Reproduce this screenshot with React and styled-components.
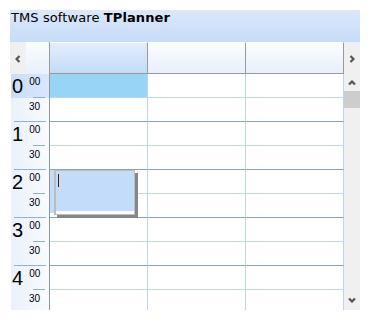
import React from "react";
import styled, { createGlobalStyle } from "styled-components";

const Global = createGlobalStyle`
  html, body { margin: 0; padding: 0; background: #fff; }
  body { font-family: "DejaVu Sans", Verdana, sans-serif; }
`;

const Page = styled.div`
  padding: 10px;
`;

const Planner = styled.div`
  width: 350px;
  height: 300px;
  display: flex;
  flex-direction: column;
  overflow: hidden;
  background: #fff;
`;

const Caption = styled.div`
  height: 32px;
  box-sizing: border-box;
  padding: 0 0 0 1px;
  font-family: "DejaVu Sans", Verdana, sans-serif;
  font-size: 13px;
  line-height: 16px;
  letter-spacing: 0.1px;
  color: #000;
  background: linear-gradient(to bottom, #dbe8fb, #c6dcf8);
  b { font-weight: bold; }
`;

const HeaderRow = styled.div`
  display: flex;
  height: 32px;
`;

const NavArrow = styled.div`
  width: 16px;
  flex: none;
  background: #f0f0f0;
  display: flex;
  align-items: center;
  justify-content: center;
  padding-top: 1px;
  box-sizing: border-box;
`;

const TimeHead = styled.div`
  width: 24px;
  flex: none;
  box-sizing: border-box;
  border-right: 1px solid #9a9a9a;
  background: linear-gradient(to bottom, #fbfdff, #e8f0fc);
`;

const ColHead = styled.div`
  width: 98px;
  flex: none;
  box-sizing: border-box;
  border-right: 1px solid #9a9a9a;
  border-bottom: 1px solid #9a9a9a;
  border-top: 1px solid #fff;
  background: ${(p) =>
    p.$active
      ? "linear-gradient(to bottom, #e2edfc, #c3dbf8)"
      : "linear-gradient(to bottom, #fbfdff, #e8f0fc)"};
`;

const Body = styled.div`
  flex: 1;
  display: flex;
  min-height: 0;
  overflow: hidden;
`;

const TimeColumn = styled.div`
  width: 40px;
  flex: none;
  box-sizing: border-box;
  border-right: 1px solid #8c96a4;
  background: linear-gradient(to right, #fff 0px, #fff 1px, #eaf1fc 1px, #f8fbff);
  display: flex;
  flex-direction: column;
`;

const Slot = styled.div`
  height: 24px;
  flex: none;
  display: flex;
  flex-direction: column;
  background: ${(p) =>
    p.$active ? "linear-gradient(to right, #fff 0px, #fff 1px, #c9ddf9 1px, #d9e7fb)" : "transparent"};
`;

const SlotContent = styled.div`
  flex: 1;
  display: flex;
  align-items: flex-start;
  justify-content: ${(p) => (p.$half ? "flex-end" : "flex-start")};
  padding: ${(p) => (p.$half ? "4px 9px 0 0" : "2px 0 0 2px")};
  font-family: "Liberation Sans", Arial, sans-serif;
  color: #000;
`;

const Hour = styled.span`
  font-size: 20px;
  line-height: 20px;
`;

const Minutes = styled.span`
  font-size: 10px;
  line-height: 10px;
  margin: 1px 0 0 6px;
`;

const HalfLabel = styled.span`
  font-size: 10px;
  line-height: 10px;
`;

const Rule = styled.div`
  height: 1px;
  flex: none;
  margin-left: ${(p) => (p.$short ? "23px" : "4px")};
  width: ${(p) => (p.$short ? "12px" : "32px")};
  background: #8bb0e6;
`;

const Grid = styled.div`
  position: relative;
  width: 294px;
  flex: none;
  display: grid;
  grid-template-columns: repeat(3, 98px);
  grid-auto-rows: 24px;
  overflow: hidden;
`;

const Cell = styled.div`
  box-sizing: border-box;
  border-right: 1px solid #bcd5f5;
  border-bottom: 1px solid ${(p) => (p.$hourEnd ? "#86a2cf" : "#bcd5f5")};
  background: ${(p) => (p.$selected ? "#98d4f6" : "#fff")};
`;

const ItemBar = styled.div`
  position: absolute;
  left: 0;
  top: 96px;
  width: 4px;
  height: 43px;
  background: #c2dcfa;
`;

const Editor = styled.div`
  position: absolute;
  left: 4px;
  top: 96px;
  width: 81px;
  height: 45px;
  box-sizing: border-box;
  border: 1px solid #bdbdbd;
  border-left-width: 2px;
  background: #fff;
  padding-bottom: 3px;
  display: flex;
  flex-direction: column;
  box-shadow: 3px 3px 0 #868686;
`;

const EditArea = styled.div`
  flex: 1;
  background: #c2dcfa;
  padding: 3px 0 0 2px;
`;

const Caret = styled.div`
  width: 1px;
  height: 13px;
  background: #3a2200;
`;

const ScrollBar = styled.div`
  width: 16px;
  flex: none;
  background: #f0f0f0;
  display: flex;
  flex-direction: column;
`;

const ScrollBtn = styled.div`
  height: ${(p) => p.$h}px;
  flex: none;
  display: flex;
  align-items: center;
  justify-content: center;
`;

const Thumb = styled.div`
  height: 17px;
  flex: none;
  background: #cdcdcd;
`;

const Track = styled.div`
  flex: 1;
`;

const Chevron = ({ dir }) => {
  const pts = {
    left: "4.5,1 1.5,4 4.5,7",
    right: "1.5,1 4.5,4 1.5,7",
    up: "1,4.5 4,1.5 7,4.5",
    down: "1,1.5 4,4.5 7,1.5",
  }[dir];
  const horiz = dir === "left" || dir === "right";
  return (
    <svg width={horiz ? 6 : 8} height={horiz ? 8 : 6} viewBox={horiz ? "0 0 6 8" : "0 0 8 6"}>
      <polyline points={pts} fill="none" stroke="#555" strokeWidth="2.2" />
    </svg>
  );
};

const hours = [0, 1, 2, 3, 4];
const rows = Array.from({ length: 10 }, (_, i) => i);

export default function App() {
  return (
    <>
      <Global />
      <Page>
        <Planner>
          <Caption>
            TMS software <b>TPlanner</b>
          </Caption>
          <HeaderRow>
            <NavArrow>
              <Chevron dir="left" />
            </NavArrow>
            <TimeHead />
            <ColHead $active />
            <ColHead />
            <ColHead />
            <NavArrow>
              <Chevron dir="right" />
            </NavArrow>
          </HeaderRow>
          <Body>
            <TimeColumn>
              {hours.map((h) => (
                <React.Fragment key={h}>
                  <Slot $active={h === 0}>
                    <SlotContent>
                      <Hour>{h}</Hour>
                      <Minutes>00</Minutes>
                    </SlotContent>
                    <Rule $short />
                  </Slot>
                  <Slot>
                    <SlotContent $half>
                      <HalfLabel>30</HalfLabel>
                    </SlotContent>
                    <Rule />
                  </Slot>
                </React.Fragment>
              ))}
            </TimeColumn>
            <Grid>
              {rows.map((r) =>
                [0, 1, 2].map((c) => (
                  <Cell
                    key={`${r}-${c}`}
                    $hourEnd={r % 2 === 1}
                    $selected={r === 0 && c === 0}
                  />
                ))
              )}
              <ItemBar />
              <Editor>
                <EditArea>
                  <Caret />
                </EditArea>
              </Editor>
            </Grid>
            <ScrollBar>
              <ScrollBtn $h={17}>
                <Chevron dir="up" />
              </ScrollBtn>
              <Thumb />
              <Track />
              <ScrollBtn $h={20}>
                <Chevron dir="down" />
              </ScrollBtn>
            </ScrollBar>
          </Body>
        </Planner>
      </Page>
    </>
  );
}
